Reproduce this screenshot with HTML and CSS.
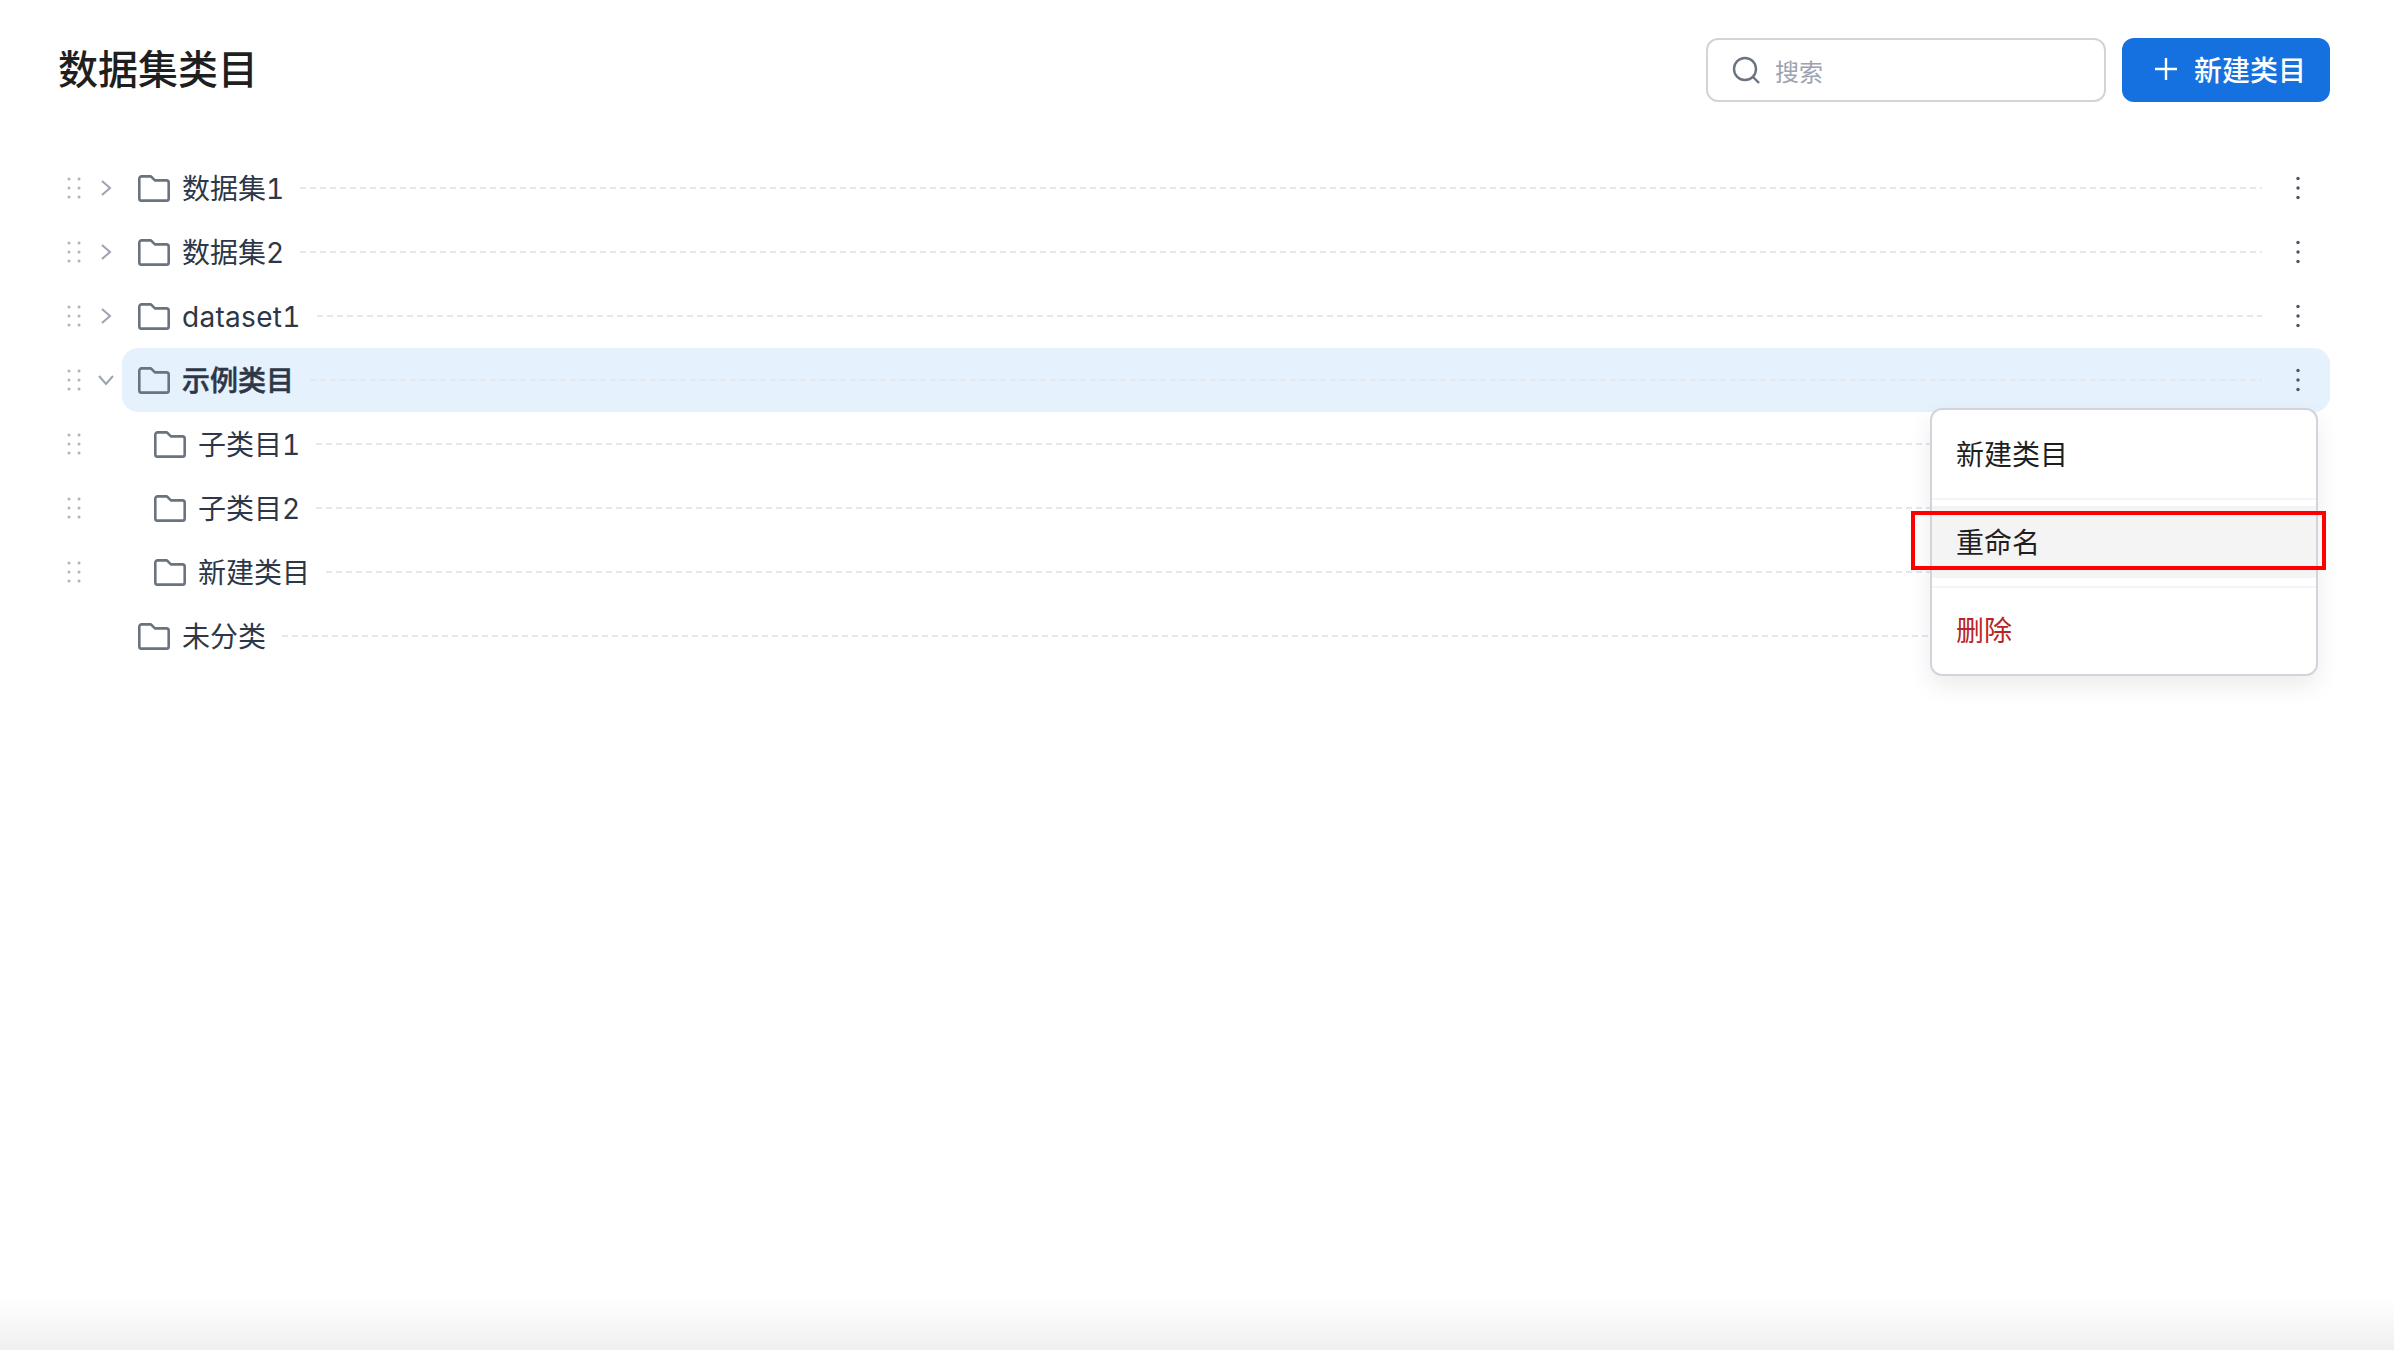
FILE: index.html
```html
<!DOCTYPE html>
<html lang="zh-CN">
<head>
<meta charset="utf-8">
<title>数据集类目</title>
<link rel="stylesheet" href="styles.css">
</head>
<body>
<svg class="defs" width="0" height="0" aria-hidden="true">
  <defs>
    <symbol id="folder" viewBox="0 0 32 27"><path d="M1.3 3.6a2.2 2.2 0 0 1 2.2-2.2h9.4l4 4h11.6a2.2 2.2 0 0 1 2.2 2.2v15.8a2.2 2.2 0 0 1-2.2 2.2H3.5a2.2 2.2 0 0 1-2.2-2.2z" fill="none" stroke="#6b7280" stroke-width="2.6" stroke-linejoin="round"/></symbol>
    <symbol id="drag" viewBox="0 0 14 22"><g fill="#aeb3bc"><circle cx="2" cy="2" r="1.5"/><circle cx="12" cy="2" r="1.5"/><circle cx="2" cy="11" r="1.5"/><circle cx="12" cy="11" r="1.5"/><circle cx="2" cy="20" r="1.5"/><circle cx="12" cy="20" r="1.5"/></g></symbol>
    <symbol id="right" viewBox="0 0 14 18"><path d="M3 2l8 7-8 7" fill="none" stroke="#9ca3af" stroke-width="2"/></symbol>
    <symbol id="down" viewBox="0 0 18 14"><path d="M2 3l7 8 7-8" fill="none" stroke="#9ca3af" stroke-width="2"/></symbol>
    <symbol id="more" viewBox="0 0 8 26"><g fill="#4b5563"><circle cx="4" cy="3.500" r="1.700"/><circle cx="4" cy="13" r="1.700"/><circle cx="4" cy="22.500" r="1.700"/></g></symbol>
  </defs>
</svg>
<main class="page">
  <header class="head">
    <h1 class="title">数据集类目</h1>
    <div class="tools">
      <label class="search">
        <svg class="search-icon" viewBox="0 0 28 28"><circle cx="13" cy="13" r="11" fill="none" stroke="#6b7280" stroke-width="2.400"/><path d="M21 21l6 6" stroke="#6b7280" stroke-width="2.400" fill="none"/></svg>
        <span class="placeholder">搜索</span>
      </label>
      <button class="primary">
        <svg class="plus" viewBox="0 0 24 24"><path d="M12 1v22M1 12h22" stroke="#fff" stroke-width="2.400" fill="none"/></svg>
        <span>新建类目</span>
      </button>
    </div>
  </header>

  <section class="tree">
    <div class="row">
      <span class="grip"><svg class="i-drag"><use href="#drag"/></svg></span>
      <span class="toggle"><svg class="i-right"><use href="#right"/></svg></span>
      <div class="node"><svg class="i-folder"><use href="#folder"/></svg><span class="name">数据集1</span><i class="dash"></i><svg class="i-more"><use href="#more"/></svg></div>
    </div>
    <div class="row">
      <span class="grip"><svg class="i-drag"><use href="#drag"/></svg></span>
      <span class="toggle"><svg class="i-right"><use href="#right"/></svg></span>
      <div class="node"><svg class="i-folder"><use href="#folder"/></svg><span class="name">数据集2</span><i class="dash"></i><svg class="i-more"><use href="#more"/></svg></div>
    </div>
    <div class="row">
      <span class="grip"><svg class="i-drag"><use href="#drag"/></svg></span>
      <span class="toggle"><svg class="i-right"><use href="#right"/></svg></span>
      <div class="node"><svg class="i-folder"><use href="#folder"/></svg><span class="name latin">dataset1</span><i class="dash"></i><svg class="i-more"><use href="#more"/></svg></div>
    </div>
    <div class="row">
      <span class="grip"><svg class="i-drag"><use href="#drag"/></svg></span>
      <span class="toggle"><svg class="i-down"><use href="#down"/></svg></span>
      <div class="node active"><svg class="i-folder"><use href="#folder"/></svg><span class="name">示例类目</span><i class="dash"></i><svg class="i-more"><use href="#more"/></svg></div>
      <div class="menu">
        <div class="item first">新建类目</div>
        <div class="sep"></div>
        <div class="item hover">重命名</div>
        <div class="sep"></div>
        <div class="item danger">删除</div>
      </div>
      <div class="mark"></div>
    </div>
    <div class="row">
      <span class="grip"><svg class="i-drag"><use href="#drag"/></svg></span>
      <span class="toggle"></span>
      <div class="node child"><svg class="i-folder"><use href="#folder"/></svg><span class="name">子类目1</span><i class="dash"></i><svg class="i-more"><use href="#more"/></svg></div>
    </div>
    <div class="row">
      <span class="grip"><svg class="i-drag"><use href="#drag"/></svg></span>
      <span class="toggle"></span>
      <div class="node child"><svg class="i-folder"><use href="#folder"/></svg><span class="name">子类目2</span><i class="dash"></i><svg class="i-more"><use href="#more"/></svg></div>
    </div>
    <div class="row">
      <span class="grip"><svg class="i-drag"><use href="#drag"/></svg></span>
      <span class="toggle"></span>
      <div class="node child"><svg class="i-folder"><use href="#folder"/></svg><span class="name">新建类目</span><i class="dash"></i><svg class="i-more"><use href="#more"/></svg></div>
    </div>
    <div class="row">
      <span class="grip"></span>
      <span class="toggle"></span>
      <div class="node"><svg class="i-folder"><use href="#folder"/></svg><span class="name">未分类</span><i class="dash"></i><svg class="i-more"><use href="#more"/></svg></div>
    </div>
  </section>
</main>
</body>
</html>
```
FILE: styles.css
```css
* { box-sizing: border-box; }
html, body { height: 100%; }
body {
  margin: 0;
  font-family: Inter, "Noto Sans CJK SC", sans-serif;
  color: #1f2937;
  background: linear-gradient(to bottom, #fff calc(100% - 52px), #f0f0f0 100%);
  overflow: hidden;
}
.defs { position: absolute; }
.page { padding: 38px 64px 0 60px; }
.head { display: flex; justify-content: space-between; align-items: center; height: 64px; }
.title { margin: 0 0 0 -2px; font-size: 40px; line-height: 64px; font-weight: 500; color: #1f1f1f; }
.tools { display: flex; gap: 16px; }
.search {
  display: flex; align-items: center; gap: 15px;
  width: 400px; height: 64px; padding-left: 24px;
  border: 2px solid #d1d5db; border-radius: 12px; background: #fff;
}
.search-icon { width: 28px; height: 28px; }
.placeholder { font-size: 24px; color: #9ca3af; }
.primary {
  display: flex; align-items: center; gap: 16px;
  width: 208px; height: 64px; padding: 0 0 2px 32px;
  border: 0; border-radius: 12px; background: #1570e0; color: #fff;
  font: 500 28px Inter, "Noto Sans CJK SC", sans-serif;
}
.plus { width: 24px; height: 24px; }
.tree { margin-top: 54px; }
.row { position: relative; display: flex; align-items: center; height: 64px; }
.grip { display: flex; justify-content: center; width: 28px; }
.toggle { display: flex; justify-content: center; width: 34px; }
.i-drag { width: 14px; height: 22px; }
.i-right { width: 14px; height: 18px; margin-left: 2px; }
.i-down { width: 18px; height: 14px; margin-left: 1px; }
.node {
  flex: 1; display: flex; align-items: center; height: 64px;
  padding: 0 20px 0 16px; border-radius: 16px;
}
.node.child { padding-left: 32px; }
.node.active { background: #e6f1fe; }
.node.active .name { font-weight: 500; -webkit-text-stroke: .5px #2d3748; }
.i-folder { width: 32px; height: 27px; flex: none; }
.name {
  margin-left: 12px; padding-top: 1px;
  font-size: 28px; line-height: 40px; color: #2d3748;
  font-variant-numeric: tabular-nums;
}
.name.latin { letter-spacing: .3px; }
.dash {
  flex: 1; height: 2px; margin: 0 24px 0 16px;
  background: repeating-linear-gradient(to right, #e5e7eb 0 6px, transparent 6px 10px);
}
.i-more { width: 8px; height: 26px; margin-right: 8px; margin-left: 8px; flex: none; }
.menu {
  position: absolute; z-index: 2; left: 1870px; top: 60px;
  display: flex; flex-direction: column;
  width: 388px; height: 268px;
  border: 2px solid #d1d5db; border-radius: 12px; background: #fff;
  box-shadow: 0 10px 24px rgba(0, 0, 0, .08);
  overflow: hidden;
  font-size: 28px;
}
.item { display: flex; align-items: center; padding: 0 24px 3px; color: #1f1f1f; }
.item.first { height: 88px; }
.sep { height: 2px; background: #f3f4f6; flex: none; }
.item.hover { height: 72px; margin: 6px 0 8px; background: #f4f4f4; }
.item.danger { flex: 1; padding-bottom: 5px; color: #b92525; }
.mark {
  position: absolute; z-index: 3; left: 1851px; top: 163px;
  width: 415px; height: 59px; border: 4px solid #f00;
}
```
